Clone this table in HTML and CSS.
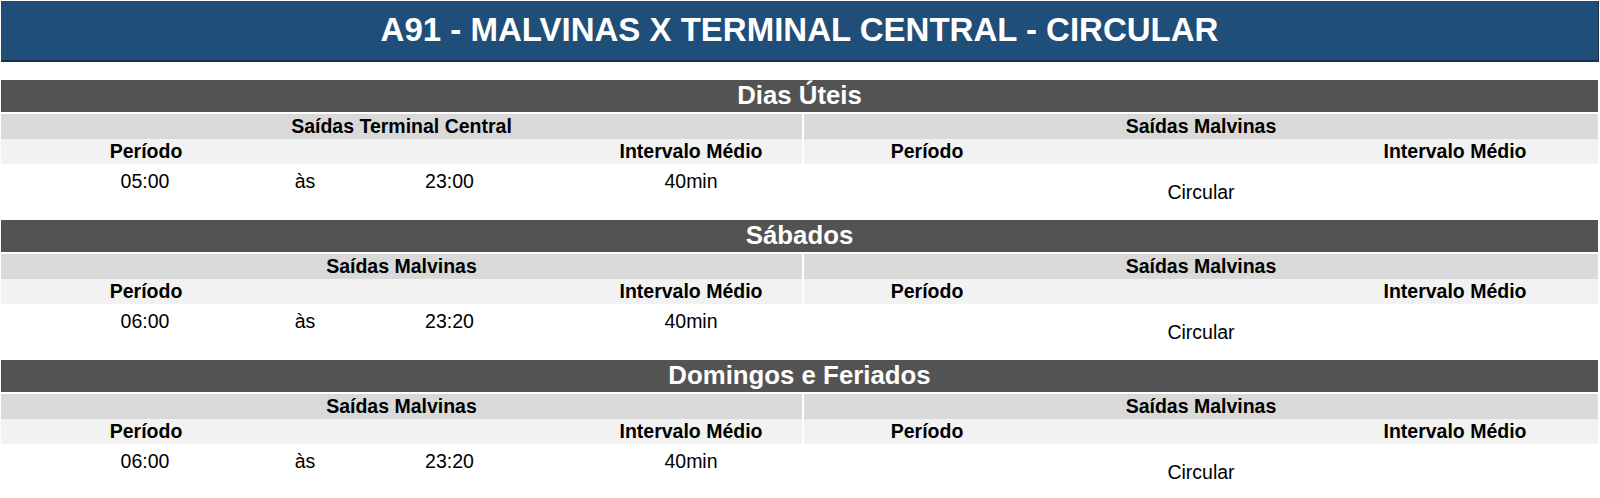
FILE: index.html
```html
<!DOCTYPE html>
<html lang="pt-BR">
<head>
<meta charset="utf-8">
<title>A91 - MALVINAS X TERMINAL CENTRAL - CIRCULAR</title>
<link rel="stylesheet" href="styles.css">
</head>
<body>
<div class="page">
  <h1 class="title">A91 - MALVINAS X TERMINAL CENTRAL - CIRCULAR</h1>

  <section class="day">
    <div class="day-head">Dias Úteis</div>
    <div class="halves">
      <div class="half left">
        <div class="sub">Saídas Terminal Central</div>
        <div class="cols-left">
          <div class="th">Período</div>
          <div></div>
          <div class="th">Intervalo Médio</div>
        </div>
        <div class="data-left">
          <div class="td">05:00</div>
          <div class="td">às</div>
          <div class="td">23:00</div>
          <div class="td interval">40min</div>
        </div>
      </div>
      <div class="half right">
        <div class="sub">Saídas Malvinas</div>
        <div class="cols-right">
          <div class="th">Período</div>
          <div></div>
          <div class="th">Intervalo Médio</div>
        </div>
        <div class="data-right">Circular</div>
      </div>
    </div>
  </section>

  <section class="day">
    <div class="day-head">Sábados</div>
    <div class="halves">
      <div class="half left">
        <div class="sub">Saídas Malvinas</div>
        <div class="cols-left">
          <div class="th">Período</div>
          <div></div>
          <div class="th">Intervalo Médio</div>
        </div>
        <div class="data-left">
          <div class="td">06:00</div>
          <div class="td">às</div>
          <div class="td">23:20</div>
          <div class="td interval">40min</div>
        </div>
      </div>
      <div class="half right">
        <div class="sub">Saídas Malvinas</div>
        <div class="cols-right">
          <div class="th">Período</div>
          <div></div>
          <div class="th">Intervalo Médio</div>
        </div>
        <div class="data-right">Circular</div>
      </div>
    </div>
  </section>

  <section class="day">
    <div class="day-head">Domingos e Feriados</div>
    <div class="halves">
      <div class="half left">
        <div class="sub">Saídas Malvinas</div>
        <div class="cols-left">
          <div class="th">Período</div>
          <div></div>
          <div class="th">Intervalo Médio</div>
        </div>
        <div class="data-left">
          <div class="td">06:00</div>
          <div class="td">às</div>
          <div class="td">23:20</div>
          <div class="td interval">40min</div>
        </div>
      </div>
      <div class="half right">
        <div class="sub">Saídas Malvinas</div>
        <div class="cols-right">
          <div class="th">Período</div>
          <div></div>
          <div class="th">Intervalo Médio</div>
        </div>
        <div class="data-right">Circular</div>
      </div>
    </div>
  </section>
</div>
</body>
</html>
```

FILE: styles.css
```css
* { box-sizing: border-box; }

html, body {
  margin: 0;
  padding: 0;
  background: #ffffff;
}

body {
  font-family: "Liberation Sans", Arial, sans-serif;
  color: #000;
}

.page {
  width: 1599px;
  padding: 1px 0 0 1px;
}

.title {
  margin: 0;
  height: 61px;
  background: #1f4e79;
  border-bottom: 2px solid #1a2f47;
  border-right: 1px solid #1a2f47;
  color: #ffffff;
  font-size: 33px;
  font-weight: bold;
  display: flex;
  align-items: center;
  justify-content: center;
  padding-bottom: 1px;
}

.day {
  width: 1597px;
}

.title + .day { margin-top: 18px; }

.day-head {
  height: 32px;
  background: #535353;
  color: #ffffff;
  font-size: 25.8px;
  font-weight: bold;
  display: flex;
  align-items: center;
  justify-content: center;
  margin-bottom: 2px;
  padding-bottom: 1px;
}

.halves {
  display: grid;
  grid-template-columns: 801px 1fr;
  column-gap: 2px;
}

.sub {
  height: 25px;
  background: #d9d9d9;
  font-size: 19.5px;
  font-weight: bold;
  display: flex;
  align-items: center;
  justify-content: center;
}

.cols-left, .cols-right {
  height: 25px;
  background: #f2f2f2;
  display: grid;
  align-items: center;
  font-size: 19.5px;
  font-weight: bold;
}

.cols-left { grid-template-columns: 290px 1fr 222px; }
.cols-right { grid-template-columns: 246px 1fr 286px; }

.th { text-align: center; }

.data-left {
  height: 56px;
  display: grid;
  grid-template-columns: 288px 32px 257px 1fr;
  align-items: start;
  padding-top: 6px;
  font-size: 19.5px;
  line-height: 22px;
}

.td { text-align: center; }
.interval { padding-left: 2px; }

.data-right {
  height: 56px;
  display: flex;
  align-items: center;
  justify-content: center;
  font-size: 19.5px;
}
```
